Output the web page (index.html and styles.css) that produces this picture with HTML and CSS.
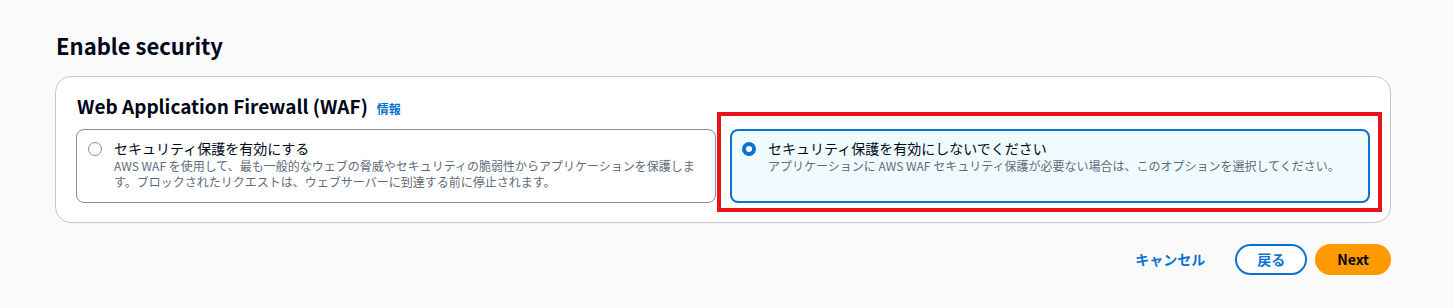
FILE: index.html
```html
<!DOCTYPE html>
<html lang="ja">
<head>
    <meta charset="UTF-8">
    <meta name="viewport" content="width=device-width, initial-scale=1.0">
    <title>Enable security</title>
    <link rel="stylesheet" href="styles.css">
</head>
<body>
    <main class="page">
        <h1 class="page-title">Enable security</h1>

        <section class="panel">
            <div class="panel-header">
                <h2 class="panel-title">Web Application Firewall (WAF)</h2>
                <a href="#" class="info-link">情報</a>
            </div>

            <div class="tiles">
                <label class="tile">
                    <span class="radio"></span>
                    <span class="tile-text">
                        <span class="tile-label">セキュリティ保護を有効にする</span>
                        <span class="tile-desc">AWS WAF を使用して、最も一般的なウェブの脅威やセキュリティの脆弱性からアプリケーションを保護します。ブロックされたリクエストは、ウェブサーバーに到達する前に停止されます。</span>
                    </span>
                </label>
                <label class="tile selected">
                    <span class="radio checked"></span>
                    <span class="tile-text">
                        <span class="tile-label">セキュリティ保護を有効にしないでください</span>
                        <span class="tile-desc">アプリケーションに AWS WAF セキュリティ保護が必要ない場合は、このオプションを選択してください。</span>
                    </span>
                    <span class="highlight"></span>
                </label>
            </div>
        </section>

        <div class="actions">
            <button class="btn btn-link">キャンセル</button>
            <button class="btn btn-normal">戻る</button>
            <button class="btn btn-primary">Next</button>
        </div>
    </main>
</body>
</html>
```

FILE: styles.css
```css
* {
    margin: 0;
    padding: 0;
    box-sizing: border-box;
}

body {
    font-family: 'Noto Sans CJK JP', 'Noto Sans', sans-serif;
    background-color: #fafafa;
    color: #000716;
}

.page {
    padding: 30px 62px 0 55px;
}

.page-title {
    font-size: 22px;
    line-height: 30px;
    font-weight: 700;
    padding-left: 1px;
    margin-bottom: 16px;
}

/* パネル */
.panel {
    background: white;
    border: 1px solid #c6c6cd;
    border-radius: 16px;
    padding: 17px 20px 19px;
}

.panel-header {
    display: flex;
    align-items: baseline;
    gap: 9px;
    margin-bottom: 11px;
}

.panel-title {
    font-size: 19px;
    line-height: 24px;
    font-weight: 700;
    padding-left: 1px;
}

.info-link {
    font-size: 12px;
    font-weight: 700;
    color: #0972d3;
    text-decoration: none;
}

.tiles {
    display: grid;
    grid-template-columns: 640px 640px;
    gap: 14px;
}

.tile {
    position: relative;
    display: flex;
    gap: 12px;
    border: 1px solid #8c8c94;
    border-radius: 8px;
    padding: 8px 11px 12px;
    cursor: pointer;
}

.tile.selected {
    border: 2px solid #0972d3;
    background-color: #f0fbff;
    padding: 7px 10px 11px;
}

.radio {
    flex: none;
    width: 14px;
    height: 14px;
    margin-top: 4px;
    border: 1.5px solid #8c8c94;
    border-radius: 50%;
    background: white;
}

.radio.checked {
    border: 4.5px solid #0972d3;
}

.tile-text {
    display: flex;
    flex-direction: column;
}

.tile-label {
    font-size: 14px;
    line-height: 20px;
    color: #000716;
}

.tile-desc {
    font-size: 12px;
    line-height: 16px;
    color: #5f6b7a;
}

.highlight {
    position: absolute;
    top: -19px;
    left: -15px;
    right: -14px;
    bottom: -11px;
    border: 4px solid #e8141c;
    pointer-events: none;
}

/* ボタン */
.actions {
    display: flex;
    justify-content: flex-end;
    gap: 8px;
    margin-top: 21px;
}

.btn {
    font-family: inherit;
    font-size: 14px;
    line-height: 21px;
    font-weight: 700;
    padding: 3px 20px;
    border: 2px solid transparent;
    border-radius: 20px;
    background: none;
    cursor: pointer;
}

.btn-link {
    color: #0972d3;
}

.btn-normal {
    color: #0972d3;
    border-color: #0972d3;
    background: white;
}

.btn-primary {
    color: #000716;
    background: #ff9900;
    border-color: #ff9900;
}
```
